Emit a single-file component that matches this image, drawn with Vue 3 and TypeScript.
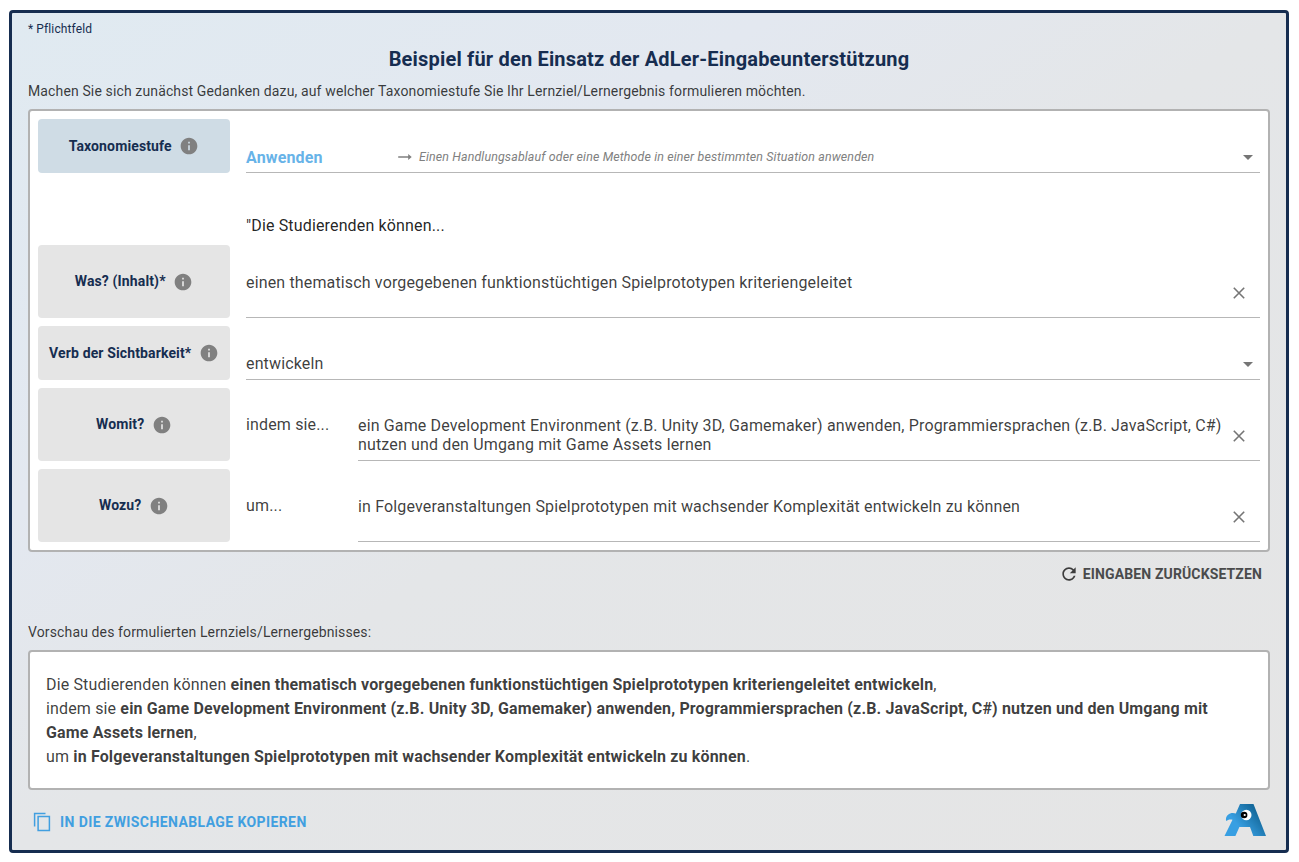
<script setup lang="ts">
interface Row {
  label: string
  kind: 'text' | 'select'
  prefix?: string
  value: string
}

const rows: Row[] = [
  { label: 'Was? (Inhalt)*', kind: 'text', value: 'einen thematisch vorgegebenen funktionstüchtigen Spielprototypen kriteriengeleitet' },
  { label: 'Verb der Sichtbarkeit*', kind: 'select', value: 'entwickeln' },
  {
    label: 'Womit?',
    kind: 'text',
    prefix: 'indem sie...',
    value: 'ein Game Development Environment (z.B. Unity 3D, Gamemaker) anwenden, Programmiersprachen (z.B. JavaScript, C#) nutzen und den Umgang mit Game Assets lernen',
  },
  { label: 'Wozu?', kind: 'text', prefix: 'um...', value: 'in Folgeveranstaltungen Spielprototypen mit wachsender Komplexität entwickeln zu können' },
]

const infoPath = 'M12 2C6.48 2 2 6.48 2 12s4.48 10 10 10 10-4.48 10-10S17.52 2 12 2zm1 15h-2v-6h2v6zm0-8h-2V7h2v2z'
</script>

<template>
  <main class="frame">
    <div class="required">* Pflichtfeld</div>
    <h1>Beispiel für den Einsatz der AdLer-Eingabeunterstützung</h1>
    <p class="intro">Machen Sie sich zunächst Gedanken dazu, auf welcher Taxonomiestufe Sie Ihr Lernziel/Lernergebnis formulieren möchten.</p>

    <section class="panel form">
      <div class="row select">
        <div class="label level">
          <span>Taxonomiestufe</span>
          <svg class="info" viewBox="0 0 24 24"><path :d="infoPath" /></svg>
        </div>
        <div class="field taxonomy">
          <strong>Anwenden</strong>
          <svg class="arrow" viewBox="0 0 14 8"><path d="M.2 3.200h10V1L13.700 4l-3.500 3V4.800H.2z" /></svg>
          <em>Einen Handlungsablauf oder eine Methode in einer bestimmten Situation anwenden</em>
          <i class="caret"></i>
        </div>
      </div>

      <div class="lead">"Die Studierenden können...</div>

      <div v-for="row in rows" :key="row.label" class="row" :class="row.kind">
        <div class="label">
          <span>{{ row.label }}</span>
          <svg class="info" viewBox="0 0 24 24"><path :d="infoPath" /></svg>
        </div>
        <div v-if="row.prefix" class="prefix">{{ row.prefix }}</div>
        <div class="field">
          <span class="value">{{ row.value }}</span>
          <i v-if="row.kind === 'select'" class="caret"></i>
          <svg v-else class="clear" viewBox="0 0 12 12"><path d="M.8.8l10.4 10.4M11.2.8L.8 11.2" /></svg>
        </div>
      </div>
    </section>

    <div class="reset-bar">
      <button class="reset" type="button">
        <svg viewBox="0 0 24 24"><path d="M17.65 6.35C16.2 4.9 14.21 4 12 4c-4.42 0-7.99 3.58-7.99 8s3.57 8 7.99 8c3.73 0 6.84-2.55 7.73-6h-2.08c-.82 2.33-3.04 4-5.65 4-3.31 0-6-2.69-6-6s2.69-6 6-6c1.66 0 3.14.69 4.22 1.78L13 11h7V4l-2.35 2.35z" /></svg>
        <span>EINGABEN ZURÜCKSETZEN</span>
      </button>
    </div>

    <p class="preview-title">Vorschau des formulierten Lernziels/Lernergebnisses:</p>
    <section class="panel preview">
      <div>Die Studierenden können <b>einen thematisch vorgegebenen funktionstüchtigen Spielprototypen kriteriengeleitet entwickeln</b>,</div>
      <div>indem sie <b>ein Game Development Environment (z.B. Unity 3D, Gamemaker) anwenden, Programmiersprachen (z.B. JavaScript, C#) nutzen und den Umgang mit Game Assets lernen</b>,</div>
      <div>um <b>in Folgeveranstaltungen Spielprototypen mit wachsender Komplexität entwickeln zu können</b>.</div>
    </section>

    <footer>
      <button class="copy" type="button">
        <svg viewBox="0 0 18 20"><path d="M1.6 14.5V1.6H12.5M5.1 4.6h11.3v13.8H5.1z" /></svg>
        <span>IN DIE ZWISCHENABLAGE KOPIEREN</span>
      </button>
      <svg class="logo" viewBox="0 0 42 34">
        <defs>
          <linearGradient id="bird" x1="6" y1="28" x2="31" y2="7" gradientUnits="userSpaceOnUse">
            <stop offset="0.3" stop-color="#389fe2" />
            <stop offset="1" stop-color="#156a9d" />
          </linearGradient>
        </defs>
        <path fill="url(#bird)" d="M16 1h13.500L42 33H29.300l-3.300-9H15.400l-4 9H.5L8.500 16.700C6 16 3.800 16.600 2.200 18c-.9-3.500.8-6.500 4-7.600 2-.7 3.800-.6 5.600.1z" />
        <circle cx="22.300" cy="12" r="5.200" fill="#fff" />
        <circle cx="20.100" cy="12" r="3.300" fill="#000" />
        <circle cx="20.700" cy="12" r="1.100" fill="#fff" />
      </svg>
    </footer>
  </main>
</template>

<style>
body {
  margin: 0;
  background: #fff;
}
</style>

<style scoped>
.frame {
  box-sizing: border-box;
  width: 1280px;
  height: 843px;
  margin: 10px 0 0 9px;
  padding: 0 16px;
  border: 3px solid #162d50;
  border-radius: 4px;
  background: linear-gradient(to bottom right, #e0eaf1 0%, #e3e8f0 30%, #e4e6e8 50%, #e5e5e5 100%);
  color: rgba(0, 0, 0, 0.77);
  font-family: Roboto, sans-serif;
  font-size: 16px;
  letter-spacing: 0.15px;
  display: flow-root;
}
.required {
  margin-top: 8px;
  font-size: 12px;
  line-height: 16px;
  letter-spacing: 0.1125px;
  color: #162d50;
}
h1 {
  margin: 8px 0 0;
  font-size: 20px;
  font-weight: 700;
  line-height: 28px;
  letter-spacing: 0.1875px;
  text-align: center;
  color: #162d50;
}
.intro,
.preview-title {
  margin: 8px 0 0;
  font-size: 14px;
  line-height: 20px;
  letter-spacing: 0.13125px;
}
.panel {
  box-sizing: border-box;
  border: 2px solid #b2b2b2;
  border-radius: 4px;
  background: #fff;
}
.form {
  height: 443px;
  margin-top: 8px;
  padding: 8px;
}
.row {
  display: flex;
  height: 73px;
  margin-bottom: 8px;
}
.row.select {
  height: 54px;
}
.label {
  display: flex;
  align-items: center;
  justify-content: center;
  flex: 0 0 192px;
  margin-right: 16px;
  border-radius: 4px;
  background: #e5e5e5;
  color: #162d50;
  font-size: 14px;
  font-weight: 700;
  letter-spacing: 0.13125px;
}
.text .label span {
  padding-bottom: 2px;
}
.level {
  background: #cfdce5;
}
.info {
  width: 20px;
  height: 20px;
  margin-left: 7.6px;
  fill: #808080;
}
.lead {
  height: 64px;
  padding-left: 208px;
  line-height: 89px;
  color: rgba(0, 0, 0, 0.87);
}
.prefix {
  flex: 0 0 112px;
  line-height: 73px;
}
.field {
  box-sizing: border-box;
  display: flex;
  flex: 1;
  min-width: 0;
  border-bottom: 1px solid #b7b7b7;
  padding-top: 28px;
}
.value {
  flex: 1;
  line-height: 19px;
}
.clear {
  width: 12px;
  height: 12px;
  margin: 14px 15px 0 8px;
  fill: none;
  stroke: #757575;
  stroke-width: 1.6;
}
.caret {
  width: 0;
  height: 0;
  margin: 8px 7px 0 auto;
  border: 5px solid transparent;
  border-top-color: #757575;
  border-bottom: 0;
}
.taxonomy strong {
  width: 152px;
  line-height: 22px;
  color: #67b3e8;
}
.arrow {
  width: 14px;
  height: 8px;
  margin: 6px 7px 0 0;
  fill: #808080;
}
.taxonomy em {
  font-size: 12.4px;
  line-height: 20px;
  letter-spacing: 0.14px;
  color: #808080;
}
button {
  display: flex;
  align-items: center;
  padding: 0;
  border: 0;
  background: none;
  font: 700 14px/20px Roboto, sans-serif;
}
.reset-bar {
  display: flex;
  justify-content: flex-end;
  margin-top: 12px;
  padding-right: 8px;
}
.reset {
  color: #4a4b4c;
  letter-spacing: 0.125px;
}
.reset svg {
  width: 20px;
  height: 20px;
  margin-right: 4px;
  fill: #3d3d3d;
}
.preview-title {
  margin-top: 38px;
}
.preview {
  height: 140px;
  margin-top: 8px;
  padding: 21px 16px;
  line-height: 24px;
}
footer {
  display: flex;
  justify-content: space-between;
  padding: 13px 4px 0 5px;
}
.copy {
  height: 36px;
  margin-top: 1px;
  color: #419fe0;
  letter-spacing: 0.4px;
}
.copy svg {
  width: 18px;
  height: 20px;
  margin-right: 9px;
  fill: none;
  stroke: #419fe0;
  stroke-width: 1.5;
}
.logo {
  width: 42px;
  height: 34px;
}
</style>
